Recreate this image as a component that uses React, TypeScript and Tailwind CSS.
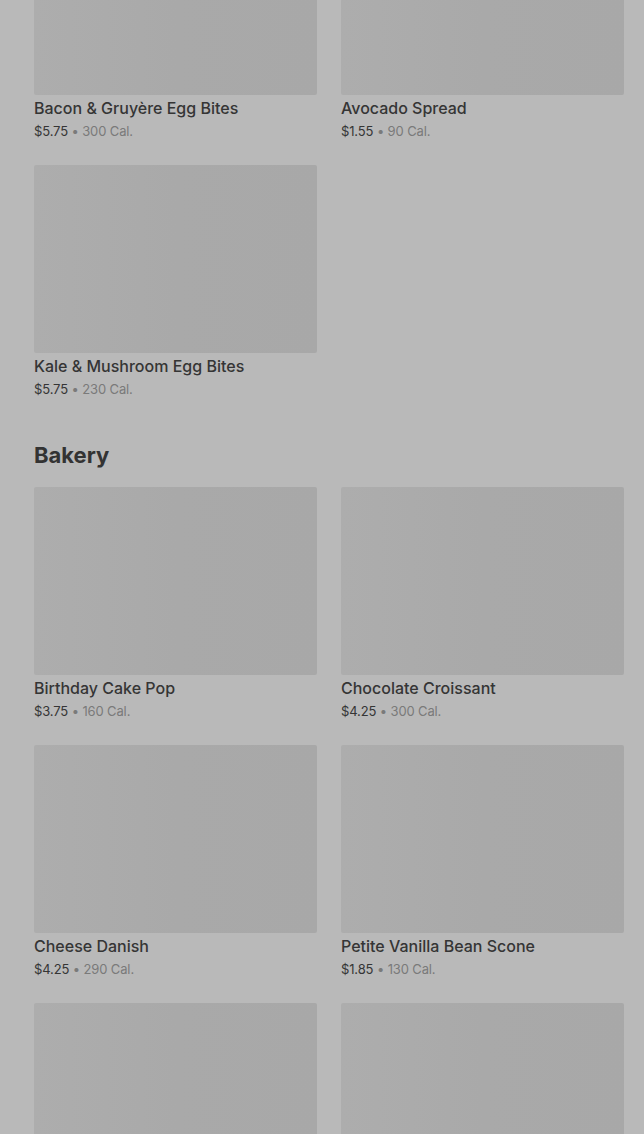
import React from 'react'

interface Item {
  name: string
  price: string
  cal: number
}

const TOP: Item[] = [
  { name: 'Bacon & Gruyère Egg Bites', price: '$5.75', cal: 300 },
  { name: 'Avocado Spread', price: '$1.55', cal: 90 },
  { name: 'Kale & Mushroom Egg Bites', price: '$5.75', cal: 230 },
]

const BAKERY: Item[] = [
  { name: 'Birthday Cake Pop', price: '$3.75', cal: 160 },
  { name: 'Chocolate Croissant', price: '$4.25', cal: 300 },
  { name: 'Cheese Danish', price: '$4.25', cal: 290 },
  { name: 'Petite Vanilla Bean Scone', price: '$1.85', cal: 130 },
  { name: 'Butter Croissant', price: '$3.45', cal: 260 },
  { name: 'Blueberry Scone', price: '$3.45', cal: 380 },
]

function ItemCard({ item }: { item: Item }) {
  return (
    <div>
      <div className="h-[188px] rounded-[2px] bg-gradient-to-r from-[#adadad] via-[#a9a9a9] to-[#a8a8a8]" />
      <div className="mt-[1px] text-[16px] font-medium leading-6 text-[#353535]">{item.name}</div>
      <div className="mt-[1px] text-[13px] leading-5 tracking-[-0.01em]">
        <span className="text-[#353535]">{item.price}</span>
        <span className="text-[#7a7a7a]"> • {item.cal} Cal.</span>
      </div>
    </div>
  )
}

export default function App() {
  return (
    <div className="h-[1134px] overflow-hidden bg-[#b9b9b9] pl-[34px] pr-[20px]" style={{ fontFamily: 'Inter, "Noto Sans", sans-serif' }}>
      <div className="-mt-[93px] grid grid-cols-2 gap-x-6 gap-y-6">
        {TOP.map((it) => (
          <ItemCard key={it.name} item={it} />
        ))}
      </div>
      <h2 className="mt-10 mb-4 text-[22px] font-bold leading-8 text-[#333333]">Bakery</h2>
      <div className="grid grid-cols-2 gap-x-6 gap-y-6">
        {BAKERY.map((it) => (
          <ItemCard key={it.name} item={it} />
        ))}
      </div>
    </div>
  )
}
